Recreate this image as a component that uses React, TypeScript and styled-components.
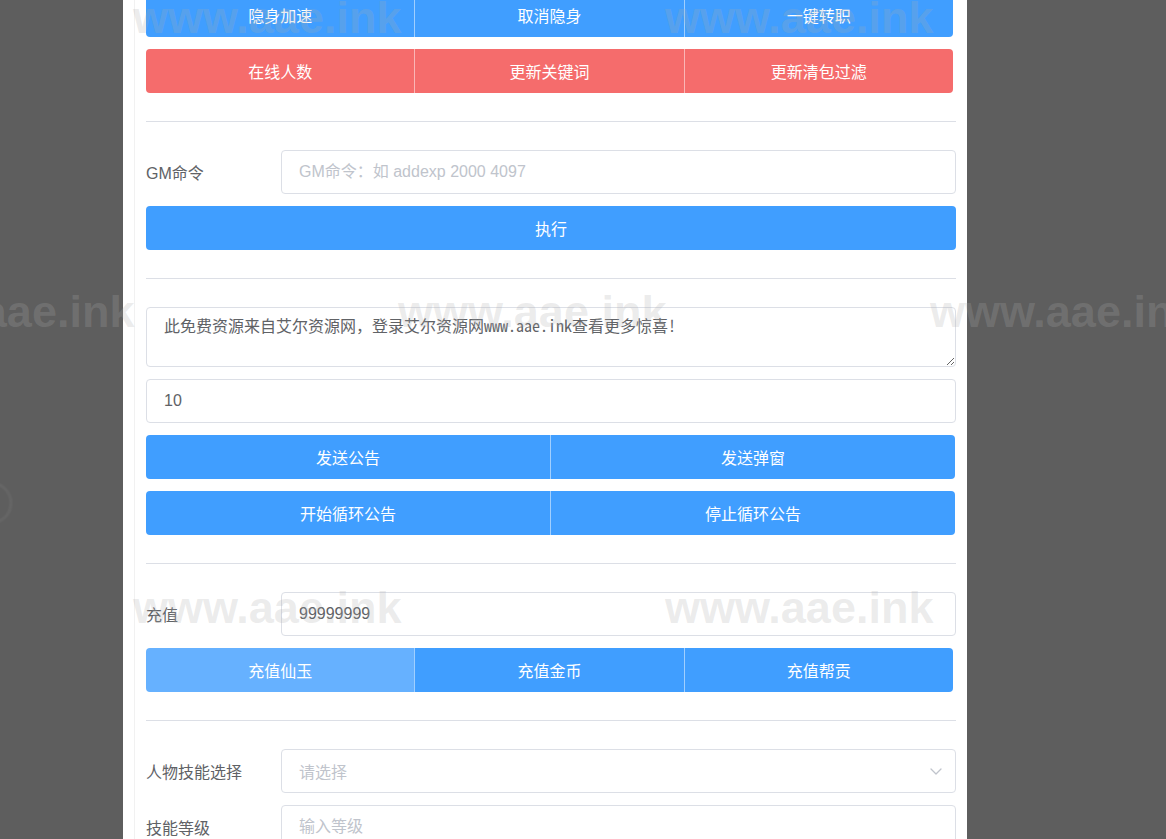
import styled, { createGlobalStyle } from "styled-components";

const GlobalStyle = createGlobalStyle`
	html, body {
		margin: 0;
		padding: 0;
		background: #5e5e5e;
	}
	body {
		font-family: "Liberation Sans", "Noto Sans CJK SC", sans-serif;
		font-size: 16px;
	}
	* {
		box-sizing: border-box;
	}
`;

const Screen = styled.div`
	position: relative;
	height: 839px;
	overflow: hidden;
	background: #5e5e5e;
`;

const Panel = styled.div`
	display: flow-root;
	margin-left: 123px;
	width: 844px;
	height: 100%;
	background: #fff;
	padding: 0 11px;
`;

const PanelBody = styled.div`
	min-height: 100%;
	border-left: 1px solid #f1f1f1;
	padding-left: 11px;
	display: flex;
	flex-direction: column;
	margin-top: -7px;
`;

const Section = styled.div`
	display: flex;
	flex-direction: column;
	gap: 12px;
	flex-shrink: 0;
`;

const Divider = styled.hr`
	width: 100%;
	border: none;
	border-top: 1px solid #dcdfe6;
	margin: 28px 0;
	flex-shrink: 0;
`;

const ButtonGroup = styled.div<{ $narrow?: boolean }>`
	display: flex;
	width: ${(p) => (p.$narrow ? "calc(100% - 3px)" : "calc(100% - 1px)")};
	height: 44px;
	border-radius: 4px;
	overflow: hidden;
`;

const tones = {
	primary: "#409eff",
	danger: "#f56c6c",
	hover: "#66b1ff",
};

const GroupButton = styled.button<{ $tone: keyof typeof tones }>`
	flex: 1;
	border: none;
	background: ${(p) => tones[p.$tone]};
	color: #fff;
	font-family: "Liberation Sans", "Noto Sans CJK SC", sans-serif;
	font-size: 16px;
	padding: 0;
	cursor: pointer;
	& + & {
		border-left: 1px solid rgba(255, 255, 255, 0.5);
	}
`;

const WideButton = styled.button`
	width: 100%;
	height: 44px;
	border: none;
	border-radius: 4px;
	background: #409eff;
	color: #fff;
	font-family: "Liberation Sans", "Noto Sans CJK SC", sans-serif;
	font-size: 16px;
`;

const FormRow = styled.div`
	display: flex;
	align-items: center;
`;

const Label = styled.label`
	width: 135px;
	flex-shrink: 0;
	color: #606266;
	font-size: 16px;
`;

const TextInput = styled.input`
	flex: 1 1 auto;
	min-width: 0;
	height: 44px;
	border: 1px solid #dcdfe6;
	border-radius: 4px;
	padding: 0 17px;
	font-family: "Liberation Sans", "Noto Sans CJK SC", sans-serif;
	font-size: 16px;
	color: #606266;
	background: #fff;
	outline: none;
	&::placeholder {
		color: #c0c4cc;
	}
`;

const TextArea = styled.textarea`
	width: 100%;
	height: 60px;
	flex-shrink: 0;
	border: 1px solid #dcdfe6;
	border-radius: 4px;
	padding: 5px 17px;
	line-height: 1.5;
	font-family: "Noto Sans Mono CJK SC", "Noto Sans CJK SC", monospace;
	font-size: 16px;
	color: #606266;
	resize: vertical;
	outline: none;
`;

const SelectBox = styled.div`
	flex: 1;
	height: 44px;
	border: 1px solid #dcdfe6;
	border-radius: 4px;
	padding: 0 12px 0 17px;
	display: flex;
	align-items: center;
	justify-content: space-between;
	color: #c0c4cc;
	font-size: 16px;
`;

const Watermarks = styled.div`
	position: absolute;
	inset: 0;
	pointer-events: none;
`;

const Mark = styled.div`
	position: absolute;
	font-family: "Liberation Sans", "DejaVu Sans", sans-serif;
	font-weight: 700;
	font-size: 45px;
	line-height: 45px;
	white-space: nowrap;
	color: rgba(172, 172, 172, 0.23);
`;

const Ring = styled.div`
	position: absolute;
	left: -30px;
	top: 482px;
	width: 42px;
	height: 42px;
	border-radius: 50%;
	border: 2px solid rgba(255, 255, 255, 0.08);
	filter: blur(1px);
`;

const marks = [
	{ x: 133, y: -5 },
	{ x: 665, y: -5 },
	{ x: -134, y: 289 },
	{ x: 398, y: 289 },
	{ x: 930, y: 289 },
	{ x: 133, y: 585 },
	{ x: 665, y: 585 },
];

const Chevron = () => (
	<svg width="14" height="14" viewBox="0 0 14 14" fill="none">
		<polyline
			points="2,5 7,10 12,5"
			stroke="#c0c4cc"
			strokeWidth="1.3"
			strokeLinecap="round"
			strokeLinejoin="round"
		/>
	</svg>
);

export default function App() {
	return (
		<>
			<GlobalStyle />
			<Screen>
				<Ring />
				<Panel>
					<PanelBody>
						<Section>
							<ButtonGroup $narrow>
								<GroupButton $tone="primary">隐身加速</GroupButton>
								<GroupButton $tone="primary">取消隐身</GroupButton>
								<GroupButton $tone="primary">一键转职</GroupButton>
							</ButtonGroup>
							<ButtonGroup $narrow>
								<GroupButton $tone="danger">在线人数</GroupButton>
								<GroupButton $tone="danger">更新关键词</GroupButton>
								<GroupButton $tone="danger">更新清包过滤</GroupButton>
							</ButtonGroup>
						</Section>

						<Divider />

						<Section>
							<FormRow>
								<Label>GM命令</Label>
								<TextInput placeholder="GM命令：如 addexp 2000 4097" />
							</FormRow>
							<WideButton>执行</WideButton>
						</Section>

						<Divider />

						<Section>
							<TextArea
								spellCheck={false}
								defaultValue="此免费资源来自艾尔资源网，登录艾尔资源网www.aae.ink查看更多惊喜!"
							/>
							<TextInput defaultValue="10" />
							<ButtonGroup>
								<GroupButton $tone="primary">发送公告</GroupButton>
								<GroupButton $tone="primary">发送弹窗</GroupButton>
							</ButtonGroup>
							<ButtonGroup>
								<GroupButton $tone="primary">开始循环公告</GroupButton>
								<GroupButton $tone="primary">停止循环公告</GroupButton>
							</ButtonGroup>
						</Section>

						<Divider />

						<Section>
							<FormRow>
								<Label>充值</Label>
								<TextInput defaultValue="99999999" />
							</FormRow>
							<ButtonGroup $narrow>
								<GroupButton $tone="hover">充值仙玉</GroupButton>
								<GroupButton $tone="primary">充值金币</GroupButton>
								<GroupButton $tone="primary">充值帮贡</GroupButton>
							</ButtonGroup>
						</Section>

						<Divider />

						<Section>
							<FormRow>
								<Label>人物技能选择</Label>
								<SelectBox>
									<span>请选择</span>
									<Chevron />
								</SelectBox>
							</FormRow>
							<FormRow>
								<Label>技能等级</Label>
								<TextInput placeholder="输入等级" />
							</FormRow>
						</Section>
					</PanelBody>
				</Panel>
				<Watermarks>
					{marks.map((m, i) => (
						<Mark key={i} style={{ left: m.x, top: m.y }}>
							www.aae.ink
						</Mark>
					))}
				</Watermarks>
			</Screen>
		</>
	);
}
